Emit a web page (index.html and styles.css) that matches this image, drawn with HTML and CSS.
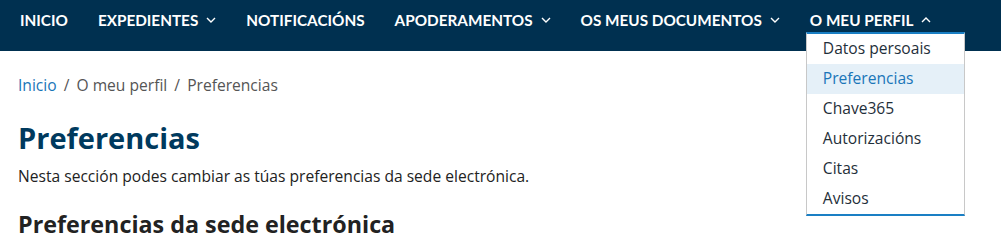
FILE: index.html
```html
<!DOCTYPE html>
<html lang="gl">
<head>
  <meta charset="UTF-8">
  <title>Preferencias</title>
  <link rel="stylesheet" href="styles.css">
</head>
<body>

  <nav class="topbar">
    <ul class="menu">
      <li><a href="#">INICIO</a></li>
      <li><a href="#">EXPEDIENTES <svg class="chev" viewBox="0 0 10 6"><path d="M1 1l4 4 4-4"/></svg></a></li>
      <li><a href="#">NOTIFICACIÓNS</a></li>
      <li><a href="#">APODERAMENTOS <svg class="chev" viewBox="0 0 10 6"><path d="M1 1l4 4 4-4"/></svg></a></li>
      <li><a href="#">OS MEUS DOCUMENTOS <svg class="chev" viewBox="0 0 10 6"><path d="M1 1l4 4 4-4"/></svg></a></li>
      <li class="open">
        <a href="#">O MEU PERFIL <svg class="chev" viewBox="0 0 10 6"><path d="M1 5l4-4 4 4"/></svg></a>
        <!-- submenu aberto -->
        <ul class="submenu">
          <li><a href="#">Datos persoais</a></li>
          <li class="active"><a href="#">Preferencias</a></li>
          <li><a href="#">Chave365</a></li>
          <li><a href="#">Autorizacións</a></li>
          <li><a href="#">Citas</a></li>
          <li><a href="#">Avisos</a></li>
        </ul>
      </li>
    </ul>
  </nav>

  <main class="content">
    <div class="breadcrumb">
      <a href="#">Inicio</a>
      <span class="sep">/</span>
      <span>O meu perfil</span>
      <span class="sep">/</span>
      <span>Preferencias</span>
    </div>

    <h1>Preferencias</h1>
    <p>Nesta sección podes cambiar as túas preferencias da sede electrónica.</p>

    <h2>Preferencias da sede electrónica</h2>
  </main>

</body>
</html>
```

FILE: styles.css
```css
* {
  margin: 0;
  padding: 0;
  box-sizing: border-box;
}

body {
  font-family: "Open Sans", "Noto Sans", sans-serif;
  background: #fff;
  color: #222;
  overflow: hidden;
}

a {
  text-decoration: none;
}

.topbar {
  background: #003050;
  height: 51px;
}

.menu {
  list-style: none;
  display: flex;
  padding: 0 5px;
}

.menu > li {
  position: relative;
}

.menu > li > a {
  display: flex;
  align-items: center;
  height: 39px;
  padding: 0 15px;
  color: #fff;
  font-family: Lato, sans-serif;
  font-weight: bold;
  font-size: 15.3px;
}

.chev {
  width: 10px;
  height: 6px;
  margin-left: 8px;
  fill: none;
  stroke: #fff;
  stroke-width: 1.4;
}

.submenu {
  position: absolute;
  top: 32px;
  left: 11px;
  width: 159px;
  list-style: none;
  background: #fff;
  border-top: 2px solid #1a7fc4;
  border-bottom: 2px solid #1a7fc4;
  border-left: 1px solid #c8c8c8;
  border-right: 1px solid #c8c8c8;
  z-index: 10;
}

.submenu li a {
  display: block;
  height: 30px;
  line-height: 28px;
  padding-left: 16px;
  color: #1f2f3a;
  font-size: 15.6px;
}

.submenu li.active a {
  background: #e5f0f8;
  color: #1a76b8;
}

.content {
  padding: 0 18px;
}

.breadcrumb {
  margin-top: 23px;
  font-size: 15.6px;
  color: #555;
  line-height: 22px;
}

.breadcrumb a {
  color: #1a76b8;
}

.breadcrumb .sep {
  margin: 0 3px;
}

h1 {
  margin-top: 22px;
  font-size: 29px;
  line-height: 40px;
  color: #003a5e;
}

p {
  margin-top: 7px;
  font-size: 15.6px;
  line-height: 22px;
}

h2 {
  margin-top: 22px;
  font-size: 23.3px;
  line-height: 30px;
  color: #222;
}
```
